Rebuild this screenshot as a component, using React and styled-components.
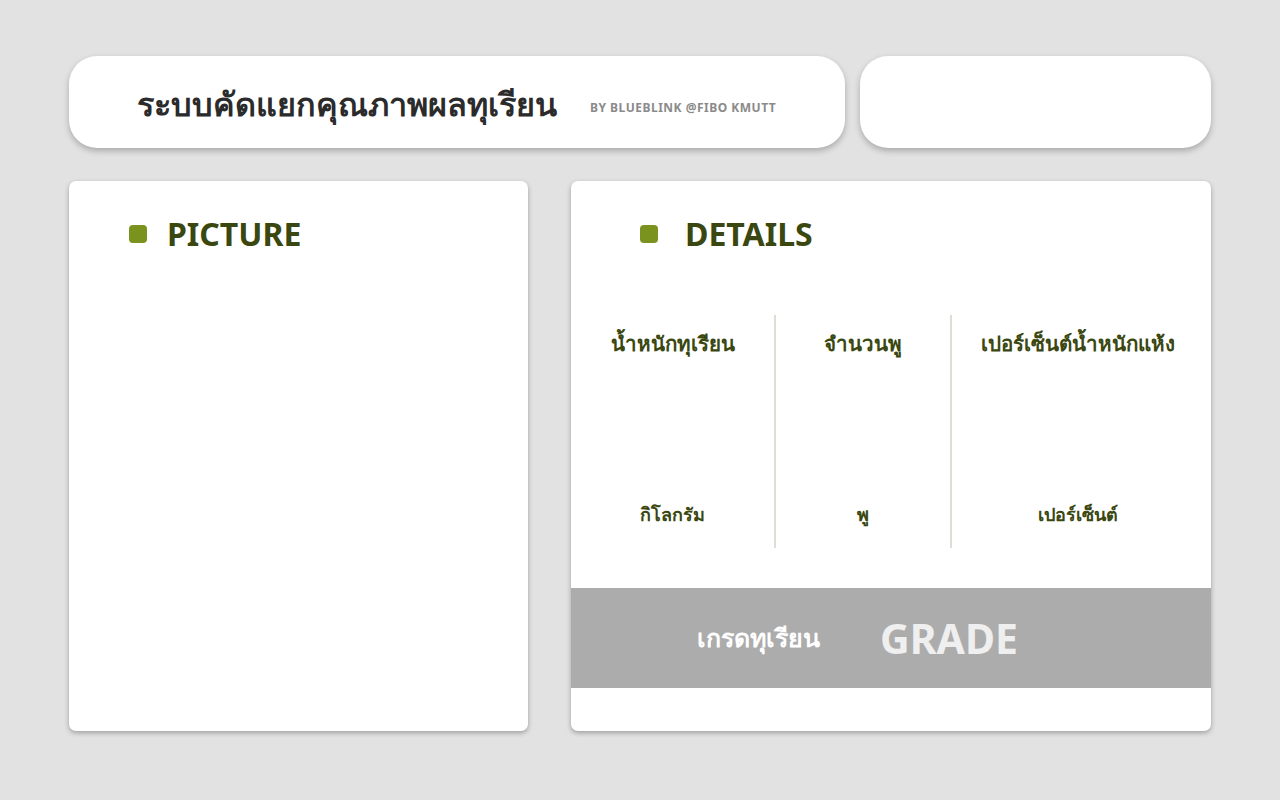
import React from "react";
import styled, { createGlobalStyle } from "styled-components";

const GlobalStyle = createGlobalStyle`
  html, body {
    margin: 0;
    padding: 0;
    background: #e2e2e2;
    font-family: "Noto Sans", "Open Sans", sans-serif;
  }
`;

const Page = styled.div`
  width: 1280px;
  height: 800px;
  box-sizing: border-box;
  padding: 56px 69px 0;
  display: flex;
  flex-direction: column;
  gap: 33px;
`;

const TopRow = styled.div`
  display: flex;
  gap: 15px;
  height: 92px;
`;

const HeaderCard = styled.div`
  background: #fff;
  border-radius: 28px;
  box-shadow: 0 3px 6px rgba(0, 0, 0, 0.25);
  width: ${(p) => p.w}px;
  display: flex;
  align-items: center;
  padding-left: 68px;
  box-sizing: border-box;
`;

const Title = styled.h1`
  margin: 4px 0 0;
  font-size: 32.3px;
  font-weight: 700;
  color: #2b2b2b;
`;

const Byline = styled.span`
  margin-left: 33px;
  margin-top: 10px;
  font-size: 12px;
  font-weight: 700;
  color: #8a8a8a;
  letter-spacing: 0.5px;
`;

const MainRow = styled.div`
  display: flex;
  gap: 43px;
  height: 550px;
`;

const Card = styled.div`
  background: #fff;
  border-radius: 7px;
  box-shadow: 0 2px 5px rgba(0, 0, 0, 0.3);
  width: ${(p) => p.w}px;
  display: flex;
  flex-direction: column;
  overflow: hidden;
`;

const Heading = styled.div`
  display: flex;
  align-items: center;
  gap: ${(p) => p.gap}px;
  padding: 32px 0 0 ${(p) => p.left}px;
  height: 40px;
`;

const Dot = styled.span`
  width: 18px;
  height: 18px;
  margin-top: 2px;
  border-radius: 4px;
  background: #7a921e;
`;

const HeadingText = styled.span`
  font-size: 32px;
  font-weight: 700;
  color: #3a4710;
`;

const Columns = styled.div`
  display: grid;
  grid-template-columns: 203px 176px 1fr;
  margin-top: 62px;
  height: 233px;
`;

const Column = styled.div`
  display: flex;
  flex-direction: column;
  align-items: center;
  justify-content: space-between;
  padding: 12px 0 19px;
  border-left: ${(p) => (p.first ? "none" : "2px solid #deded4")};
  padding-right: ${(p) => (p.last ? "8px" : "0")};
`;

const Label = styled.div`
  font-size: 20.5px;
  font-weight: 600;
  color: #3a4710;
`;

const Unit = styled.div`
  font-size: 18px;
  font-weight: 600;
  color: #3a4710;
`;

const GradeBar = styled.div`
  margin-top: 40px;
  height: 100px;
  background: #acacac;
  display: flex;
  align-items: center;
  padding-left: 126px;
  gap: 60px;
`;

const GradeLabel = styled.span`
  font-size: 25px;
  font-weight: 600;
  color: #fff;
`;

const GradeValue = styled.span`
  font-size: 41px;
  font-weight: 700;
  color: #efefef;
`;

const details = [
  { label: "น้ำหนักทุเรียน", unit: "กิโลกรัม" },
  { label: "จำนวนพู", unit: "พู" },
  { label: "เปอร์เซ็นต์น้ำหนักแห้ง", unit: "เปอร์เซ็นต์" },
];

export default function App() {
  return (
    <Page>
      <GlobalStyle />
      <TopRow>
        <HeaderCard w={776}>
          <Title>ระบบคัดแยกคุณภาพผลทุเรียน</Title>
          <Byline>BY BLUEBLINK @FIBO KMUTT</Byline>
        </HeaderCard>
        <HeaderCard w={351} />
      </TopRow>
      <MainRow>
        <Card w={459}>
          <Heading left={60} gap={20}>
            <Dot />
            <HeadingText>PICTURE</HeadingText>
          </Heading>
        </Card>
        <Card w={640}>
          <Heading left={69} gap={27}>
            <Dot />
            <HeadingText>DETAILS</HeadingText>
          </Heading>
          <Columns>
            {details.map((d, i) => (
              <Column key={i} first={i === 0} last={i === details.length - 1}>
                <Label>{d.label}</Label>
                <Unit>{d.unit}</Unit>
              </Column>
            ))}
          </Columns>
          <GradeBar>
            <GradeLabel>เกรดทุเรียน</GradeLabel>
            <GradeValue>GRADE</GradeValue>
          </GradeBar>
        </Card>
      </MainRow>
    </Page>
  );
}
